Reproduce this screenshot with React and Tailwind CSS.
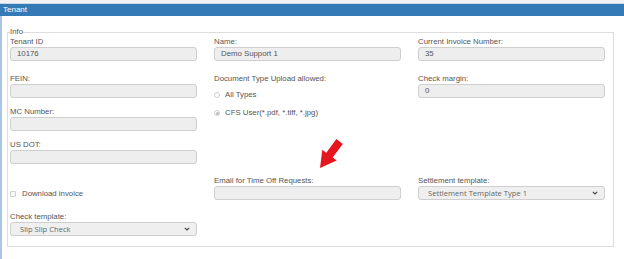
import React from 'react';

const label = "block h-[10px] leading-[10px] text-[7.8px] text-[#555] whitespace-nowrap";
const input = "block w-full h-[14px] rounded-[3px] border border-[#cfcfcf] bg-[#eeeeee] pl-[6px] text-[7.8px] leading-[12px] text-[#555]";

function Field({ title, value, className = '' }) {
  return (
    <div className={className}>
      <span className={label}>{title}</span>
      <div className={input}>{value}</div>
    </div>
  );
}

function Select({ value }) {
  return (
    <div className="flex h-[14px] w-full items-center justify-between rounded-[3px] border border-[#cfcfcf] bg-[#efefef] pl-[9px] pr-[6px] font-['Open_Sans',sans-serif] text-[7.6px] text-[#666]">
      <span className="leading-[12px]">{value}</span>
      <svg width="6" height="4" viewBox="0 0 6 4" fill="none">
        <path d="M0.8 0.8 L3 3 L5.2 0.8" stroke="#444" strokeWidth="1.1" />
      </svg>
    </div>
  );
}

function Radio({ checked, text, className = '' }) {
  return (
    <div className={`flex h-[10px] items-center ${className}`}>
      <span className="flex h-[6px] w-[6px] items-center justify-center rounded-full border border-[#cfcfcf] bg-white">
        {checked && <span className="h-[3px] w-[3px] rounded-full bg-[#bdbdbd]" />}
      </span>
      <span className="ml-[5px] text-[7.8px] leading-[10px] text-[#555]">{text}</span>
    </div>
  );
}

export default function App() {
  return (
    <div className="relative h-[259px] w-[624px] overflow-hidden bg-white font-['Liberation_Sans',Arial,sans-serif]">
      <div className="h-[4px] border-b border-[#c9d9ea] bg-[#f2f2f2]" />
      <div className="flex h-[12px] items-center bg-[#337ab7] pl-[3px] text-[8px] text-white">Tenant</div>
      <div className="h-[243px] border-l-2 border-[#a9c6e3] pt-[11px]">
        <fieldset className="ml-[5px] w-[607px] border border-[#dddddd] pl-[2px] pb-[10px]">
          <legend className="h-[10px] text-[7.8px] leading-[10px] text-[#555]">Info</legend>
          <div className="grid grid-cols-[187px_187px_187px] gap-x-[17px]">
            {/* row 1 */}
            <Field title="Tenant ID" value="10176" />
            <Field title="Name:" value="Demo Support 1" />
            <Field title="Current Invoice Number:" value="35" />

            {/* row 2 */}
            <div className="mt-[13px]">
              <Field title="FEIN:" value="" />
              <Field title="MC Number:" value="" className="mt-[9px]" />
              <Field title="US DOT:" value="" className="mt-[9px]" />
            </div>
            <div className="mt-[13px]">
              <span className={label}>Document Type Upload allowed:</span>
              <Radio text="All Types" className="mt-[6px]" />
              <Radio checked text="CFS User(*.pdf, *.tiff, *.jpg)" className="mt-[8px]" />
            </div>
            <div className="mt-[13px]">
              <Field title="Check margin:" value="0" />
            </div>

            {/* row 3 */}
            <div className="mt-[12px] flex items-end">
              <div className="flex h-[12px] items-center">
                <span className="h-[6px] w-[6px] rounded-[1px] border border-[#cfcfcf] bg-[#f7f7f7]" />
                <span className="ml-[6px] text-[7.8px] leading-[10px] text-[#555]">Download invoice</span>
              </div>
            </div>
            <Field title="Email for Time Off Requests:" value="" className="mt-[12px]" />
            <div className="mt-[12px]">
              <span className={label}>Settlement template:</span>
              <Select value="Settlement Template Type 1" />
            </div>

            {/* row 4 */}
            <div className="mt-[12px]">
              <span className={label}>Check template:</span>
              <Select value="Slip Slip Check" />
            </div>
          </div>
        </fieldset>
      </div>

      {/* annotation arrow */}
      <svg className="absolute left-[315px] top-[135px]" width="35" height="38" viewBox="0 0 35 38">
        <polygon points="5,33 21.7,25.5 17.7,22.5 27.8,8.9 21.4,4.1 11.3,17.7 7.3,14.7" fill="#e5161d" />
      </svg>
    </div>
  );
}
